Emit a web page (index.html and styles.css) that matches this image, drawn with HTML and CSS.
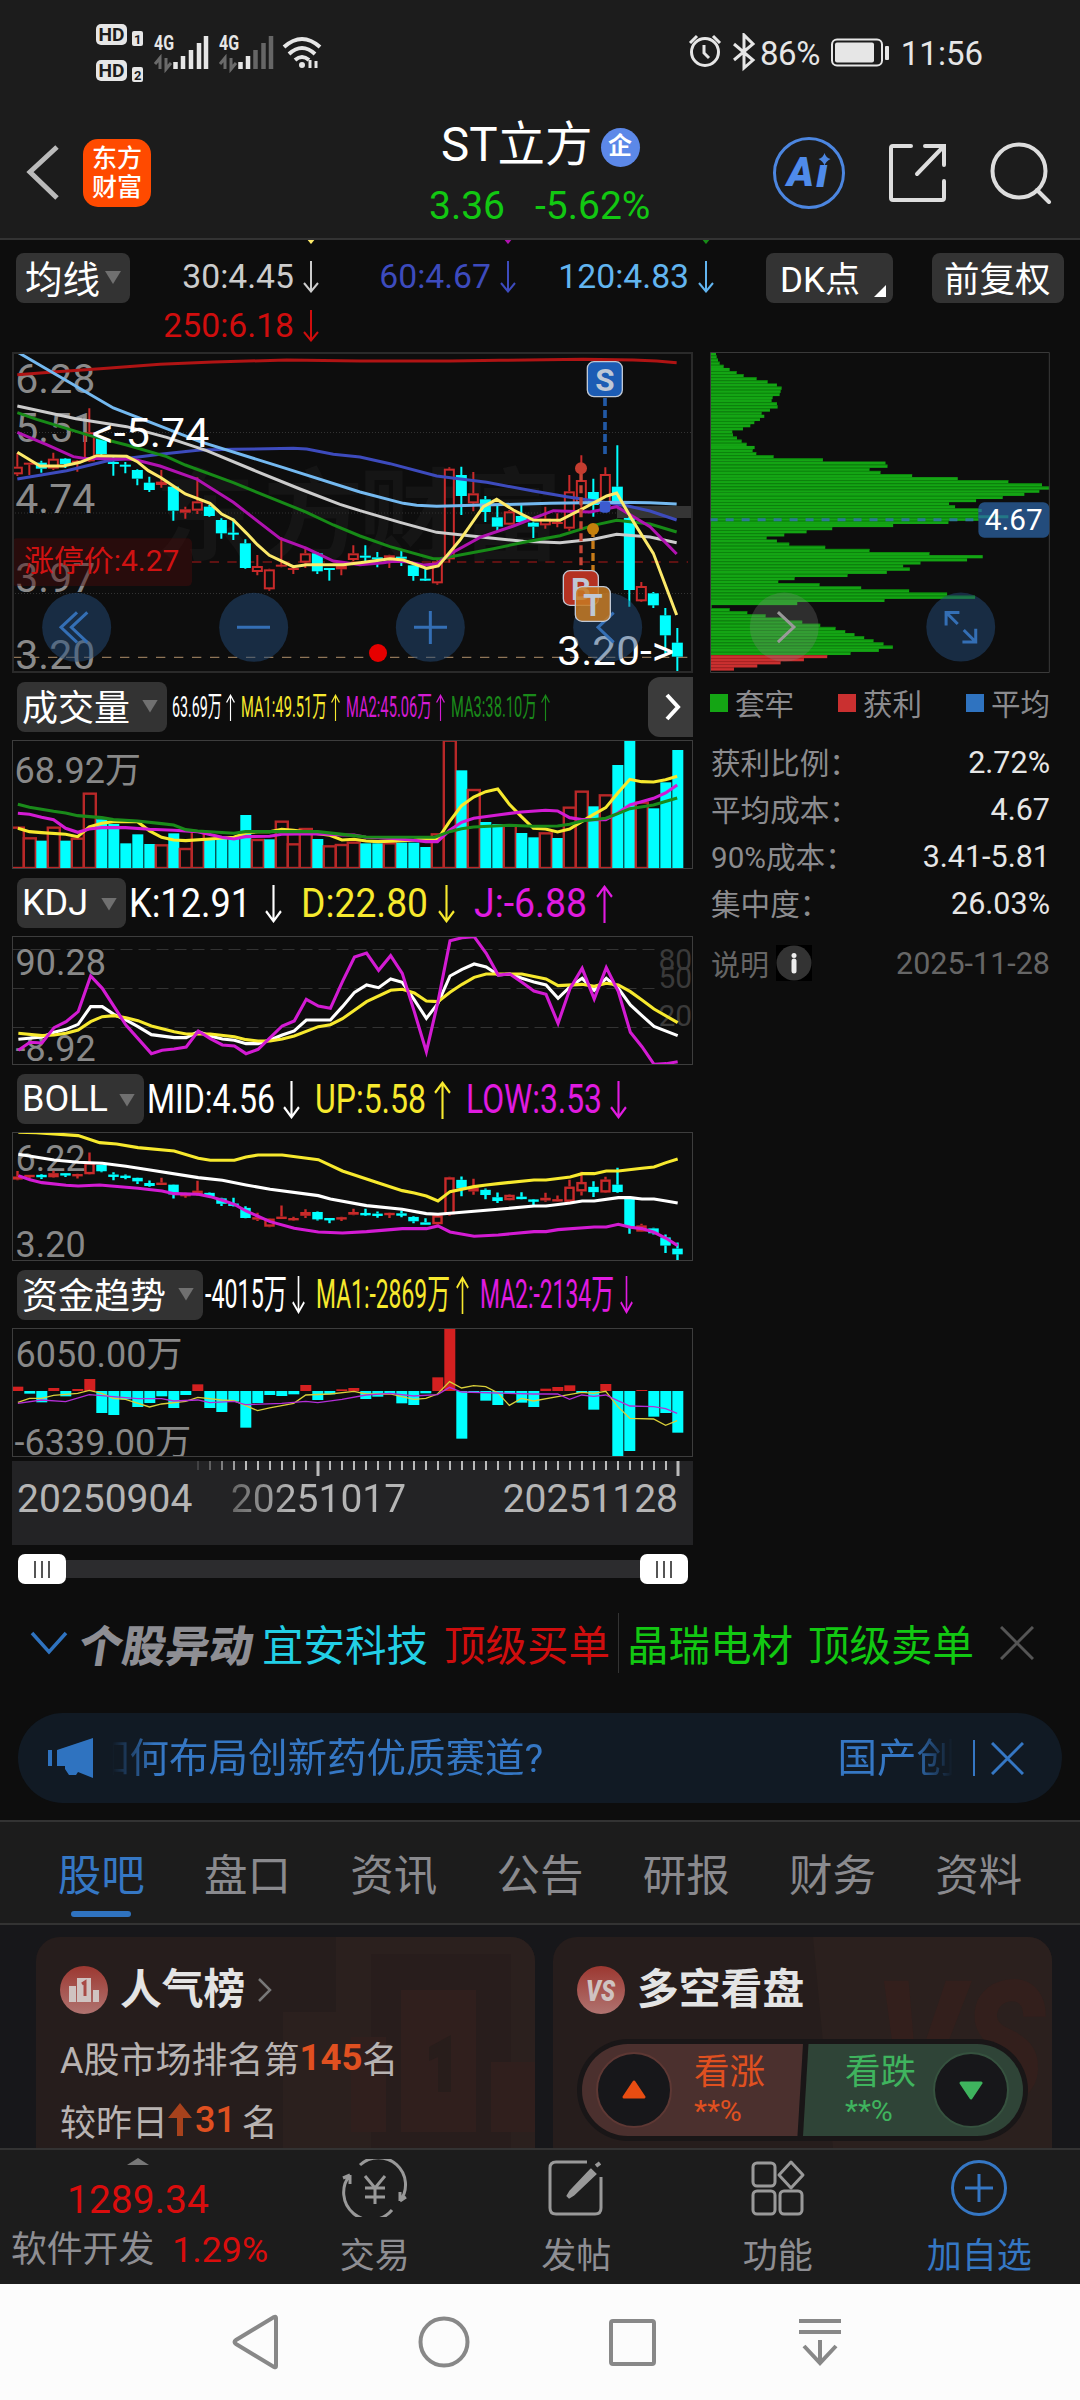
FILE: index.html
```html
<!DOCTYPE html>
<html lang="zh-CN">
<head>
  <meta charset="UTF-8">
  <title>ST立方</title>
  <link rel="stylesheet" href="styles.css">
</head>
<body>

<svg class="defs">
  <symbol id="down" viewBox="0 0 16 32" preserveAspectRatio="none"><path d="M8 0V30M1 22L8 30.5L15 22" fill="none" stroke="currentColor" stroke-width="2"/></symbol>
  <symbol id="up" viewBox="0 0 16 32" preserveAspectRatio="none"><path d="M8 32V2M1 10L8 1.5L15 10" fill="none" stroke="currentColor" stroke-width="2"/></symbol>
</svg>

<div class="status-bar">
  <svg width="230" height="70" viewBox="94 20 230 70">
    <g fill="#e6e6e6">
      <rect x="96" y="24" width="31" height="21" rx="5"/>
      <rect x="132" y="31" width="11" height="15" rx="2"/>
      <rect x="96" y="60" width="31" height="21" rx="5"/>
      <rect x="132" y="67" width="11" height="15" rx="2"/>
    </g>
    <g class="hd">
      <text x="98.500" y="41" textLength="26">HD</text>
      <text x="98.500" y="77" textLength="26">HD</text>
      <text class="num" x="134" y="43.500">1</text>
      <text class="num" x="134" y="79.500">2</text>
    </g>
    <g class="net">
      <text x="154" y="50" textLength="20" lengthAdjust="spacingAndGlyphs">4G</text>
      <text x="219" y="50" textLength="20" lengthAdjust="spacingAndGlyphs">4G</text>
    </g>
    <g stroke="#6a6a6a" stroke-width="3" fill="none">
      <path d="M160 69V58L155 64M166 58V69L171 63M225 69V58L220 64M231 58V69L236 63"/>
    </g>
    <g stroke="#e6e6e6" stroke-width="4.500">
      <path d="M175.500 69V62M183 69V56M191 69V50M199 69V43M206 69V36M240.500 69V62M248 69V56"/>
      <path d="M255.500 69V50M263.500 69V43M271 69V36" stroke="#666"/>
    </g>
    <g stroke="#e6e6e6" stroke-width="4" fill="none">
      <path d="M284 47Q302 31 320 47M289 54Q302 42 315 54M295 60Q302 54 309 60"/>
      <path d="M310 68V60M316 61V68" stroke-width="3"/>
      <circle cx="302" cy="65" r="2" fill="#e6e6e6" stroke-width="2"/>
    </g>
  </svg>
  <div class="status-right">
    <svg width="72" height="40" viewBox="688 34 72 40" fill="none" stroke="#e6e6e6">
      <circle cx="705" cy="53" r="13.500" stroke-width="3"/>
      <path d="M704 46V54L709 59M690 44L697 37M720 44L713 37" stroke-width="3"/>
      <path d="M734 45L753 61L744 69V36L753 45L734 61" stroke-width="3"/>
    </svg>
    <span class="battery-text">86%</span>
    <svg class="battery" width="60" height="30" viewBox="831 38 60 30">
      <rect x="833" y="39.500" width="50" height="26" rx="5" fill="none" stroke="#e6e6e6" stroke-width="2"/>
      <rect x="836" y="42.500" width="39" height="20" rx="2" fill="#e6e6e6"/>
      <rect x="886" y="46" width="4" height="14" rx="1" fill="#e6e6e6"/>
    </svg>
    <span>11:56</span>
  </div>
</div>

<div class="header">
  <svg class="back" width="36" height="60" viewBox="0 0 36 60"><path d="M33 4L6 29L33 55" fill="none" stroke="#bbb" stroke-width="5"/></svg>
  <div class="app-logo">东方<br>财富</div>
  <div class="title-box">
    <div class="stock-name">ST立方<span class="badge">企</span></div>
    <div class="quote"><span>3.36</span><span>-5.62%</span></div>
  </div>
  <div class="header-icons">
    <svg width="74" height="74" viewBox="0 0 74 74">
      <circle cx="37" cy="37" r="34.500" fill="none" stroke="#4c86e0" stroke-width="3"/>
      <text class="ai" x="15" y="50" textLength="27">A</text>
      <text class="ai" x="44" y="51" textLength="12">ı</text>
      <path d="M52.500 17Q54 22 58.500 23Q54 25 52.500 29.500Q51 25 46.500 23Q51 22 52.500 17Z" fill="#4c86e0"/>
    </svg>
    <svg width="60" height="62" viewBox="0 0 60 62"><path d="M23 4H5Q3 4 3 6V56Q3 58 5 58H54Q56 58 56 56V39M37 4H56V23M56 4L29 32" fill="none" stroke="#ddd" stroke-width="4" stroke-linecap="round"/></svg>
    <svg width="62" height="62" viewBox="0 0 62 62"><circle cx="29" cy="29" r="26.500" fill="none" stroke="#ddd" stroke-width="4"/><path d="M47 48L59 60" stroke="#ddd" stroke-width="4" stroke-linecap="round"/></svg>
  </div>
</div>

<div class="ma-bar">
  <div class="tag ma-select">均线<i class="caret"></i></div>
  <div class="ma-values">
    <span class="c-yellow">5:3.73<svg><use href="#down"/></svg></span>
    <span class="c-magenta">10:4.27<svg><use href="#down"/></svg></span>
    <span class="c-green">20:4.46<svg><use href="#down"/></svg></span>
    <span class="c-grey">30:4.45<svg><use href="#down"/></svg></span>
    <span class="c-blue">60:4.67<svg><use href="#down"/></svg></span>
    <span class="c-sky">120:4.83<svg><use href="#down"/></svg></span>
    <span class="c-red">250:6.18<svg><use href="#down"/></svg></span>
  </div>
  <div class="tag dk">DK点</div>
  <div class="tag fq">前复权</div>
</div>

<div class="charts">
  <div class="left">
    <svg class="kline" viewBox="36 36 2043 963">
      <g class="watermark"><text x="465" y="635">东</text><text x="790" y="635">方</text><text x="1075" y="635">财</text><text x="1385" y="635">富</text></g>
      <path d="M36 277.500H2078M36 519H2078M36 760.500H2078" stroke="#333" stroke-width="3" stroke-dasharray="3 6"/>
      <path d="M576 666H2064" stroke="#7a1515" stroke-width="5" stroke-dasharray="28 25"/>
      <path d="M36 952H2064" stroke="#8f7557" stroke-width="4" stroke-dasharray="28 26"/>
      <rect x="1851" y="498" width="228" height="36" fill="#353535"/>
      <g class="scale">
        <text x="46" y="158">6.28</text>
        <text x="46" y="305">5.51</text>
        <text x="46" y="518">4.74</text>
        <text x="46" y="757">3.97</text>
        <text x="46" y="988">3.20</text>
      </g>
      <g id="candles"></g>
      <g class="ma-lines">
        <polyline stroke="#b01414" points="52,104 170,95 300,86 480,73 640,66 860,60 1080,63 1350,63 1500,61 1750,58 1900,60 1970,63 2030,68"/>
        <polyline stroke="#3d4bbd" points="52,417 200,392 320,363 480,343 600,330 700,328 880,325 920,327 1000,343 1080,351 1170,371 1310,408 1460,427 1600,453 1700,470 1800,485 1880,497 1950,513 2030,540"/>
        <polyline stroke="#74b9f0" points="52,36 340,204 600,305 850,383 1080,456 1210,490 1250,496 1310,499 1450,495 1650,490 1850,487 1950,488 2030,492"/>
        <polyline stroke="#ccc" points="52,198 228,236 380,260 500,292 620,332 760,390 900,447 1020,493 1080,512 1200,547 1310,577 1450,592 1570,604 1680,608 1780,598 1850,583 1950,591 2030,608"/>
        <polyline stroke="#178a17" points="52,218 110,238 270,287 380,315 500,350 556,375 700,428 920,517 1000,555 1080,588 1170,620 1300,656 1320,656 1480,626 1580,605 1680,587 1780,556 1850,541 1950,552 2030,576"/>
        <polyline stroke="#b012b0" points="52,277 140,314 220,350 250,355 400,358 480,378 590,417 700,487 840,595 920,625 1000,663 1080,674 1150,668 1180,664 1220,665 1270,675 1310,672 1350,642 1440,592 1540,558 1660,512 1770,516 1850,500 1950,560 2030,642"/>
        <polyline stroke="#fce96a" points="52,337 120,378 190,378 240,367 290,347 380,349 412,365 445,392 483,413 556,462 630,490 665,522 700,540 740,580 772,614 808,646 880,680 920,674 1030,674 1080,668 1170,656 1210,660 1280,685 1315,678 1380,600 1450,500 1490,478 1540,510 1600,540 1680,541 1750,505 1820,468 1850,459 1900,545 1960,640 2030,825"/>
      </g>
      <path d="M1815 174V345" stroke="#2259a5" stroke-width="11" stroke-dasharray="24 12"/>
      <path d="M1743 400V692" stroke="#c74536" stroke-width="10" stroke-dasharray="24 12"/>
      <path d="M1779 567V742" stroke="#c77b18" stroke-width="10" stroke-dasharray="24 12"/>
      <circle cx="1743" cy="385" r="18" fill="#c43d30"/>
      <circle cx="1779" cy="567" r="18" fill="#c5800c"/>
      <rect x="1799" y="484" width="32" height="34" rx="10" fill="#3c5bd0"/>
      <rect x="36" y="595" width="540" height="143" rx="14" fill="#4a0a0a" fill-opacity=".45"/>
      <text class="limit" x="72" y="694" textLength="466">涨停价:4.27</text>
      <g class="peak">
        <text x="276" y="320" textLength="352">&lt;-5.74</text>
        <text x="1672" y="975" textLength="350">3.20-&gt;</text>
      </g>
      <g fill="#244c7a" fill-opacity=".5">
        <circle cx="230" cy="862" r="103.500"/>
        <circle cx="761" cy="862" r="103.500"/>
        <circle cx="1291" cy="862" r="103.500"/>
        <circle cx="1823" cy="862" r="103.500"/>
      </g>
      <path d="M231 817L183 862L231 907M262 817L214 862L262 907M711 862H810M1242 862H1341M1291 813V912M1841 818L1794 862L1841 907" fill="none" stroke="#346fb5" stroke-width="9"/>
      <g class="mark" stroke="#c0c8d4" stroke-width="4">
        <rect x="1762" y="65" width="105" height="105" rx="20" fill="#1c5cb4"/>
        <text x="1815" y="154">S</text>
        <rect x="1690" y="692" width="105" height="104" rx="20" fill="#b43222"/>
        <text x="1743" y="780">B</text>
        <rect x="1726" y="740" width="105" height="104" rx="20" fill="#c77a22" fill-opacity=".85"/>
        <text x="1779" y="829">T</text>
      </g>
      <circle cx="1134" cy="939" r="27" fill="#e60000"/>
    </svg>

    <div class="ind-row">
      <div class="tag vol">成交量<i class="caret"></i></div>
      <svg width="478" height="67" viewBox="167 0 478 67" class="small">
        <g color="#fff"><text x="172" y="44" textLength="50">63.69万</text><use href="#up" x="226" y="21" width="9" height="27"/></g>
        <g color="#f7e92e"><text x="241" y="44" textLength="86">MA1:49.51万</text><use href="#up" x="331" y="21" width="9" height="27"/></g>
        <g color="#d31bd3"><text x="346" y="44" textLength="86">MA2:45.06万</text><use href="#up" x="436" y="21" width="9" height="27"/></g>
        <g color="#1a8a1a"><text x="451" y="44" textLength="86">MA3:38.10万</text><use href="#up" x="541" y="21" width="9" height="27"/></g>
      </svg>
      <div class="pager"><svg width="20" height="30" viewBox="0 0 20 30"><path d="M4 3L15 15L4 27" fill="none" stroke="#fff" stroke-width="4"/></svg></div>
    </div>
    <div class="pane">
      <svg viewBox="12 740 680 129">
        <text x="14" y="783">68.92万</text>
        <g id="volume"></g>
        <g class="lines" transform="translate(-.5 675) scale(.4464 .3333)">
          <polyline stroke="#f7e92e" points="40,460 66,470 93,473 147,478 174,485 200,456 228,445 254,440 308,440 335,468 362,487 389,495 416,497 470,492 524,487 550,474 577,470 604,470 631,463 658,466 712,476 739,481 766,495 793,493 820,498 847,500 900,497 927,496 954,490 980,494 1007,440 1034,392 1061,366 1088,350 1115,342 1141,388 1168,425 1195,460 1222,462 1249,471 1276,462 1303,440 1330,418 1357,398 1384,354 1411,313 1437,320 1464,321 1491,314 1517,304"/>
          <polyline stroke="#d31bd3" points="40,415 66,418 93,427 120,434 147,460 174,472 200,462 228,458 281,458 335,463 389,466 443,470 497,487 524,492 550,485 604,484 631,478 712,476 766,480 793,480 820,487 874,490 927,496 954,500 980,500 1007,466 1034,442 1061,430 1115,420 1168,411 1222,406 1249,408 1276,428 1303,434 1357,434 1384,414 1411,390 1437,380 1464,370 1491,354 1517,330"/>
          <polyline stroke="#1a8a1a" points="40,388 66,397 120,409 147,414 174,422 228,428 254,434 308,438 362,446 389,450 416,464 443,468 524,475 550,470 604,470 712,470 793,482 820,486 974,487 1007,470 1034,461 1061,456 1141,451 1195,454 1249,453 1276,448 1303,438 1357,430 1384,416 1411,401 1464,390 1517,369"/>
        </g>
      </svg>
    </div>

    <div class="ind-row">
      <div class="tag kdj">KDJ<i class="caret"></i></div>
      <svg width="566" height="67" viewBox="126 0 566 67">
        <g color="#fff"><text x="129" y="48" textLength="122">K:12.91</text><use href="#down" x="265" y="16" width="17" height="38"/></g>
        <g color="#f7e92e"><text x="301" y="48" textLength="127">D:22.80</text><use href="#down" x="438" y="16" width="17" height="38"/></g>
        <g color="#e01be0"><text x="474" y="48" textLength="113">J:-6.88</text><use href="#up" x="596" y="16" width="17" height="38"/></g>
      </svg>
    </div>
    <div class="pane">
      <svg viewBox="12 936 680 129">
        <path d="M12 949.500H660M12 988.500H660M12 1027.500H650" stroke="#333" stroke-width="1" stroke-dasharray="12 6"/>
        <text x="15" y="975">90.28</text>
        <text x="15" y="1061">-8.92</text>
        <g class="levels"><text x="658" y="970">80</text><text x="658" y="988">50</text><text x="658" y="1026">20</text></g>
        <g class="lines" transform="translate(0 925) scale(.4464 .3333)">
          <polyline stroke="#fff" points="40,343 93,336 120,322 147,313 174,298 202,245 228,245 254,268 281,285 308,305 338,329 389,338 416,338 443,320 470,333 497,342 524,346 550,356 577,356 604,345 631,330 658,318 685,285 739,285 766,245 793,202 820,180 847,188 874,162 900,172 927,225 954,280 980,235 1007,153 1034,133 1061,117 1088,126 1115,150 1141,147 1168,160 1195,171 1222,180 1249,220 1276,185 1303,160 1330,196 1357,160 1384,190 1411,240 1437,272 1464,304 1517,332"/>
          <polyline stroke="#f7e92e" points="40,325 93,332 120,330 147,325 174,315 202,290 228,275 254,272 281,278 308,287 338,303 389,320 416,327 470,327 524,335 550,344 577,348 604,348 631,342 658,333 712,305 739,299 766,281 820,230 874,196 900,193 927,204 954,228 980,230 1007,202 1034,178 1061,157 1088,147 1168,147 1222,162 1249,182 1303,178 1330,184 1357,175 1384,180 1411,200 1437,225 1464,252 1517,293"/>
          <polyline stroke="#d31bd3" points="40,376 66,352 93,354 120,308 147,290 174,260 202,153 228,190 281,300 338,386 362,376 389,372 416,366 443,318 470,341 497,360 524,363 550,386 577,373 631,303 658,288 685,223 712,243 739,250 766,170 793,96 820,84 847,136 874,92 900,145 927,260 954,380 980,230 1007,47 1034,38 1061,35 1088,85 1115,150 1141,147 1168,172 1195,198 1222,208 1249,295 1276,190 1303,130 1330,222 1357,128 1384,200 1411,322 1437,365 1464,418 1491,416 1517,410"/>
        </g>
      </svg>
    </div>

    <div class="ind-row">
      <div class="tag bol">BOLL<i class="caret"></i></div>
      <svg width="548" height="67" viewBox="144 0 548 67">
        <g color="#fff"><text x="147" y="48" textLength="128">MID:4.56</text><use href="#down" x="283" y="16" width="17" height="38"/></g>
        <g color="#f7e92e"><text x="315" y="48" textLength="111">UP:5.58</text><use href="#up" x="434" y="16" width="17" height="38"/></g>
        <g color="#e01be0"><text x="466" y="48" textLength="136">LOW:3.53</text><use href="#down" x="610" y="16" width="17" height="38"/></g>
      </svg>
    </div>
    <div class="pane">
      <svg viewBox="12 1132 680 129">
        <text x="15" y="1171">6.22</text>
        <text x="15" y="1257">3.20</text>
        <g id="boll"></g>
        <g class="lines" transform="translate(0 925) scale(.4464 .3333)">
          <polyline stroke="#f7e92e" points="40,622 80,623 174,632 222,653 260,657 308,668 389,678 443,700 470,706 524,706 550,696 577,690 631,690 712,704 766,738 847,774 900,797 927,804 954,813 980,828 1007,800 1061,785 1088,780 1115,776 1195,765 1222,765 1276,756 1303,746 1330,746 1357,738 1384,738 1437,730 1464,726 1491,713 1517,702"/>
          <polyline stroke="#fff" points="40,688 120,705 174,712 228,715 281,724 335,735 443,758 497,766 550,780 604,793 712,812 739,822 820,842 900,853 954,866 980,868 1034,862 1115,853 1195,843 1222,843 1276,834 1303,828 1330,828 1384,818 1411,818 1437,822 1464,822 1491,828 1517,834"/>
          <polyline stroke="#d31bd3" points="40,752 66,764 93,773 147,781 174,783 222,780 308,790 362,798 389,806 443,808 470,815 497,826 524,838 550,858 604,890 658,910 712,921 766,924 820,920 874,914 900,911 954,911 980,903 1007,921 1061,934 1115,930 1195,920 1222,920 1249,914 1330,906 1357,906 1384,898 1411,907 1437,911 1464,922 1491,940 1517,962"/>
        </g>
      </svg>
    </div>

    <div class="ind-row">
      <div class="tag fnd">资金趋势<i class="caret"></i></div>
      <svg width="489" height="67" viewBox="203 0 489 67">
        <g color="#fff"><text x="205" y="47" textLength="82">-4015万</text><use href="#down" x="292" y="15" width="13" height="38"/></g>
        <g color="#f7e92e"><text x="316" y="47" textLength="134">MA1:-2869万</text><use href="#up" x="456" y="15" width="13" height="38"/></g>
        <g color="#e01be0"><text x="480" y="47" textLength="134">MA2:-2134万</text><use href="#down" x="620" y="15" width="13" height="38"/></g>
      </svg>
    </div>
    <div class="pane">
      <svg viewBox="12 1328 680 129">
        <text x="15" y="1367">6050.00万</text>
        <text x="14" y="1455">-6339.00万</text>
        <g id="fund"></g>
        <g class="lines thin" transform="translate(-.5 1260) scale(.4464 .3333)">
          <polyline stroke="#d9cf3a" points="40,427 66,415 93,415 120,406 174,400 200,391 228,400 254,415 281,418 335,441 362,432 416,424 443,412 497,420 524,422 577,452 604,444 658,430 685,405 739,402 793,394 820,402 874,402 927,418 954,415 980,402 1007,365 1034,384 1061,377 1088,380 1115,398 1141,436 1168,415 1195,423 1249,410 1303,397 1330,400 1357,394 1384,440 1411,475 1464,477 1491,496 1517,482"/>
          <polyline stroke="#b32ed6" points="40,430 93,420 147,425 200,404 254,410 308,416 362,416 389,423 443,420 470,428 524,424 550,434 631,430 685,424 712,428 766,418 820,405 874,400 927,408 980,404 1007,382 1034,396 1195,402 1249,402 1276,418 1303,405 1330,409 1357,405 1384,422 1411,438 1464,440 1491,446 1517,460"/>
        </g>
      </svg>
    </div>

    <div class="dates">
      <svg id="ticks" width="681" height="20" viewBox="12 0 681 20"></svg>
      <div class="date-labels"><span>20250904</span><span class="mid">20251017</span><span>20251128</span></div>
    </div>
    <div class="slider">
      <div class="handle"><i></i><i></i><i></i></div>
      <div class="track"></div>
      <div class="handle"><i></i><i></i><i></i></div>
    </div>
  </div>

  <div class="right">
    <svg class="chips" viewBox="61 36 1021 964">
      <g id="chips"></g>
      <path d="M62.500 37.500H1080V998.500H62.500Z" fill="none" stroke="#3a3a3a" stroke-width="3"/>
      <path d="M63 540H867" stroke="#2c7a94" stroke-width="9" stroke-dasharray="24 24" stroke-dashoffset="3"/>
      <rect x="867" y="487" width="213" height="107" rx="18" fill="#234c7c"/>
      <path d="M867 512H877M867 531H957" stroke="#237886" stroke-width="9"/>
      <text class="avg" x="886" y="570" textLength="174">4.67</text>
      <circle cx="284" cy="862" r="103.500" fill="#888" fill-opacity=".27"/>
      <path d="M265 817L313 862L265 907" fill="none" stroke="#999" stroke-width="9"/>
      <circle cx="814" cy="862" r="103.500" fill="#244c7a" fill-opacity=".5"/>
      <path d="M810 818H770V857M770 818L805 853M859 867V907H819M823 871L859 907" fill="none" stroke="#346fb5" stroke-width="9"/>
    </svg>
    <div class="legend">
      <span><i class="g"></i>套牢</span><span><i class="r"></i>获利</span><span><i class="b"></i>平均</span>
    </div>
    <dl class="chip-info">
      <div><dt>获利比例：</dt><dd>2.72%</dd></div>
      <div><dt>平均成本：</dt><dd>4.67</dd></div>
      <div><dt>90%成本：</dt><dd>3.41-5.81</dd></div>
      <div><dt>集中度：</dt><dd>26.03%</dd></div>
    </dl>
    <div class="explain"><span>说明</span><svg width="36" height="36" viewBox="0 0 36 36"><rect width="36" height="36" fill="#000"/><circle cx="18" cy="18" r="17.500" fill="#333"/><circle cx="18" cy="10.500" r="2.500" fill="#eee"/><path d="M18 16V26" stroke="#eee" stroke-width="5" stroke-linecap="round"/></svg><time>2025-11-28</time></div>
  </div>
</div>

<div class="alerts">
  <svg width="38" height="24" viewBox="0 0 38 24"><path d="M2 2L19 21L36 2" fill="none" stroke="#2f73c0" stroke-width="3.500"/></svg>
  <b>个股异动</b>
  <span class="c-cyan">宜安科技</span>
  <span class="c-red">顶级买单</span>
  <i class="split"></i>
  <span class="c-lime">晶瑞电材</span>
  <span class="c-lime">顶级卖单</span>
  <svg class="close" width="34" height="34" viewBox="0 0 34 34"><path d="M1 1L33 33M33 1L1 33" stroke="#555" stroke-width="3"/></svg>
</div>

<div class="notice">
  <svg width="46" height="40" viewBox="0 0 46 40"><path d="M0 12H4V28H0ZM9 12L45 0V40L30 34L28 37H21L17 31V28H9Z" fill="#2f73c0"/></svg>
  <div class="scroll-text"><span>如何布局创新药优质赛道?</span><span class="next">国产创</span></div>
  <i></i>
  <svg width="33" height="33" viewBox="0 0 33 33"><path d="M1 1L32 32M32 1L1 32" stroke="#3577c4" stroke-width="3"/></svg>
</div>

<div class="tabs">
  <span class="active">股吧</span><span>盘口</span><span>资讯</span><span>公告</span><span>研报</span><span>财务</span><span>资料</span>
</div>

<div class="cards">
  <div class="card">
    <svg class="card-bg" viewBox="0 0 499 211"><path d="M247 75H300V0H499V211H247Z" fill="#2b201e"/><path d="M335 17H475V211H335Z" fill="#281d1c"/><path d="M365 53H440V195H365ZM455 125H499V195H455ZM315 100H350V195H315Z" fill="#301f1d"/><path d="M393 110L415 98V155H402V120L393 124Z" fill="#281d1b"/></svg>
    <h3><svg width="48" height="48" viewBox="0 0 48 48"><circle cx="24" cy="24" r="24" fill="url(#rd)"/><path d="M9 20H16V36H9ZM17 12H31V36H17ZM33 24H39V36H33Z" fill="#cfc3c1"/><path d="M22 18L25 16V30" fill="none" stroke="#a84a45" stroke-width="3"/></svg>人气榜<svg class="more" width="16" height="26" viewBox="0 0 16 26"><path d="M2 2L13 13L2 24" fill="none" stroke="#777" stroke-width="2.500"/></svg></h3>
    <p>A股市场排名第<b>145</b>名</p>
    <p>较昨日<svg width="24" height="34" viewBox="0 0 24 34"><path d="M12 0L24 15H15V33H9V15H0Z" fill="#a8421c"/></svg><b class="diff">31</b> 名</p>
  </div>
  <div class="card">
    <svg class="card-bg" viewBox="0 0 499 211"><path d="M260 0H499V211H280Z" fill="#2b201e"/><text class="vs-bg" x="322" y="165" textLength="170">VS</text></svg>
    <h3><svg width="48" height="48" viewBox="0 0 48 48"><defs><linearGradient id="rd" x2="0" y2="1"><stop offset="0" stop-color="#9c3831"/><stop offset="1" stop-color="#b07370"/></linearGradient></defs><circle cx="24" cy="24" r="24" fill="url(#rd)"/><text class="vs" x="9" y="35" textLength="29">VS</text></svg>多空看盘</h3>
    <div class="vote">
      <div class="bull"><div class="dot"><svg width="24" height="20" viewBox="0 0 24 20"><path d="M12 2L22 17H2Z" fill="#e84d12" stroke="#e84d12" stroke-width="3" stroke-linejoin="round"/></svg></div><div>看涨<small>**%</small></div></div>
      <div class="bear"><div>看跌<small>**%</small></div><div class="dot"><svg width="24" height="20" viewBox="0 0 24 20"><path d="M12 18L22 3H2Z" fill="#3fb45e" stroke="#3fb45e" stroke-width="3" stroke-linejoin="round"/></svg></div></div>
    </div>
  </div>
</div>

<div class="toolbar">
  <div class="index">
    <i></i>
    <strong>1289.34</strong>
    <div><span>软件开发</span><em>1.29%</em></div>
  </div>
  <div class="tool"><svg width="66" height="58" viewBox="0 0 66 58" fill="none" stroke="#999" stroke-width="3"><path d="M18 6A27 27 0 0 1 58 42M58 42L64 38M58 42V33M50 51A27 27 0 0 1 8 16M8 16L1 19M8 16V25"/><path d="M23 17L33 29L43 17M33 29V45M23 29H43M23 38H43"/></svg>交易</div>
  <div class="tool"><svg width="56" height="56" viewBox="0 0 56 56" fill="none" stroke="#999" stroke-width="3"><path d="M39 2H8Q2 2 2 8V48Q2 54 8 54H47Q53 54 53 48V17"/><path d="M43 11L23 32L20 37L25 34L46 14ZM48 6L52 3" stroke-width="4"/></svg>发帖</div>
  <div class="tool"><svg width="56" height="56" viewBox="0 0 56 56" fill="none" stroke="#999" stroke-width="3"><rect x="3" y="3" width="22" height="23" rx="4"/><rect x="3" y="31" width="22" height="23" rx="4"/><rect x="30" y="31" width="22" height="23" rx="4"/><path d="M41 2L53 15L41 28L29 15Z" stroke-linejoin="round"/></svg>功能</div>
  <div class="tool add"><svg width="58" height="58" viewBox="0 0 58 58" fill="none" stroke="#3577c4" stroke-width="3"><circle cx="29" cy="29" r="26.500"/><path d="M29 15V43M15 29H43"/></svg>加自选</div>
</div>

<div class="nav">
  <svg width="60" height="60" viewBox="0 0 60 60"><path d="M50 6V54Q50 56 48 55L10 32Q7 30 10 28L48 5Q50 4 50 6Z"/></svg>
  <svg width="60" height="60" viewBox="0 0 60 60"><circle cx="30" cy="30" r="23.500"/></svg>
  <svg width="60" height="60" viewBox="0 0 60 60"><rect x="9" y="9" width="43" height="43" rx="2"/></svg>
  <svg width="60" height="60" viewBox="0 0 60 60"><path d="M9 9H51M9 20H51M30 28V51M14 34L30 51L46 34"/></svg>
</div>

<script src="script.js"></script>
</body>
</html>
```
FILE: styles.css
```css
* {
  box-sizing: border-box;
}

body {
  margin: 0;
  width: 1080px;
  height: 2400px;
  overflow: hidden;
  background: #0d0d0d;
  color: #fff;
  font-family: Roboto, "Noto Sans CJK SC", sans-serif;
}

svg {
  display: block;
  flex: none;
}

i, em {
  font-style: normal;
}

.defs {
  width: 0;
  height: 0;
  position: absolute;
}

.c-yellow { color: #fce96a; }
.c-magenta { color: #b012b0; }
.c-green { color: #178a17; }
.c-grey { color: #ccc; }
.c-blue { color: #3d4bbd; }
.c-sky { color: #62b5f0; }
.c-red { color: #cf0d0d; }
.c-cyan { color: #22cfe6; }
.c-lime { color: #12c812; }

/* status bar */
.status-bar {
  height: 107px;
  padding: 20px 97px 0 94px;
  background: #1c1c1c;
  display: flex;
  justify-content: space-between;
}

.status-right {
  display: flex;
  align-items: center;
  height: 66px;
  font-size: 33px;
  color: #e6e6e6;
}

.battery-text {
  letter-spacing: -0.5px;
}

.battery {
  margin: 0 11px 0 10px;
}

.hd text {
  font-size: 19px;
  font-weight: 700;
  fill: #1c1c1c;
}

.hd .num {
  font-size: 13px;
}

.net text {
  font-size: 20px;
  font-weight: 700;
  fill: #e6e6e6;
}

/* header */
.header {
  height: 133px;
  padding: 0 28px 0 24px;
  background: #1c1c1c;
  border-bottom: 2px solid #333;
  display: flex;
  align-items: center;
}

.app-logo {
  width: 68px;
  height: 68px;
  margin-left: 23px;
  padding-top: 5px;
  border-radius: 15px;
  background: #ff4a00;
  font-size: 25px;
  line-height: 29px;
  font-weight: 500;
  text-align: center;
}

.title-box {
  flex: 1;
  padding-left: 278px;
}

.stock-name {
  display: flex;
  align-items: center;
  height: 50px;
  padding-left: 12px;
  line-height: 44px;
  font-size: 47.5px;
  padding-bottom: 4px;
}

.badge {
  width: 39px;
  height: 39px;
  margin: 4px 0 0 8px;
  border-radius: 50%;
  background: #5c88e8;
  font-size: 24px;
  line-height: 36px;
  font-weight: 700;
  text-align: center;
}

.quote {
  display: flex;
  gap: 30px;
  height: 51px;
  line-height: 69px;
  font-size: 39px;
  color: #12c812;
}

.header-icons {
  display: flex;
  align-items: center;
  gap: 42px;
}

.ai {
  font: italic 900 41px Roboto;
  fill: #4f8bea;
}

/* MA bar */
.tag {
  height: 50px;
  padding: 0 9px 4px 5px;
  border-radius: 8px;
  background: #333;
  display: flex;
  align-items: center;
  flex: none;
  font-size: 36px;
  white-space: nowrap;
}

.caret {
  width: 16px;
  height: 13px;
  margin-top: 3px;
  margin-left: auto;
  background: #707070;
  clip-path: polygon(0 0, 100% 0, 50% 100%);
}

.vol { width: 150px; }
.kdj { width: 109px; padding-bottom: 0; }
.bol { width: 127px; padding-bottom: 0; }
.fnd { width: 186px; }

.ma-bar {
  height: 112px;
  padding: 13px 16px;
  overflow: hidden;
  display: flex;
  align-items: flex-start;
}

.ma-select {
  width: 114px;
  padding-left: 9px;
  font-size: 37.5px;
}

.ma-values {
  display: grid;
  grid-template-columns: 189px 197px 198px;
  grid-auto-rows: 49px;
  width: 636px;
  margin-top: -50px;
  flex: none;
}

.ma-values span {
  display: flex;
  justify-content: flex-end;
  align-items: center;
  gap: 9px;
  font-size: 33.7px;
}

.ma-values svg {
  width: 16px;
  height: 32px;
}

.dk {
  position: relative;
  width: 127px;
  padding-left: 14px;
  font-size: 35px;
}

.dk::after {
  content: "";
  position: absolute;
  right: 7px;
  bottom: 6px;
  border: 6px solid transparent;
  border-right-color: #fff;
  border-bottom-color: #fff;
}

.fq {
  width: 132px;
  margin-left: 39px;
  padding-left: 12px;
  font-size: 35.5px;
}

/* charts */
.charts {
  display: grid;
  grid-template-columns: 681px 340px;
  column-gap: 17px;
  padding-left: 12px;
  height: 1244px;
}

.kline {
  width: 681px;
  height: 321px;
  outline: 2px solid #2a2a2a;
  outline-offset: -2px;
}

.kline text {
  font-size: 123px;
}

.kline .watermark text {
  font-size: 300px;
  font-weight: 700;
  fill: #151515;
}

.scale text {
  fill: #8a8a8a;
}

.peak text {
  fill: #fff;
}

.kline .limit {
  font-size: 88px;
  fill: #d01212;
}

.ma-lines polyline {
  fill: none;
  stroke-width: 9;
}

.kline .mark text {
  font-size: 94px;
  font-weight: 700;
  text-anchor: middle;
  fill: #bfc8d6;
  stroke: none;
}

.ind-row {
  display: flex;
  height: 67px;
  padding-left: 5px;
  align-items: center;
}

.ind-row text {
  font-size: 40px;
  fill: currentColor;
}

.ind-row .small text {
  font-size: 29px;
}

.pager {
  width: 45px;
  height: 60px;
  margin-left: auto;
  padding: 15px;
  border-radius: 12px 0 0 12px;
  background: #3b3b3b;
}

.pane {
  height: 129px;
}

.pane > svg {
  width: 681px;
  height: 129px;
  outline: 1px solid #3d3d3d;
  outline-offset: -1px;
}

.pane text {
  font-size: 36px;
  fill: #888;
}

.pane .levels text {
  font-size: 30px;
  fill: #3a3a3a;
}

.lines polyline {
  fill: none;
  stroke-width: 3.1px;
  vector-effect: non-scaling-stroke;
}

.thin polyline {
  stroke-width: 1.3px;
}

.dates {
  height: 84px;
  margin-top: 4px;
  background: #232325;
}

.date-labels {
  display: flex;
  justify-content: space-between;
  padding: 0 15px 0 5px;
  font-size: 39px;
  line-height: 36px;
  color: #b5b5b5;
}

.date-labels .mid {
  margin-right: 58px;
  background: linear-gradient(90deg, #666, #b5b5b5 35%);
  -webkit-background-clip: text;
  color: transparent;
}

.slider {
  display: flex;
  align-items: center;
  height: 30px;
  margin-top: 9px;
  padding: 0 5px 0 6px;
}

.track {
  flex: 1;
  height: 18px;
  background: #2c2c2e;
}

.handle {
  width: 48px;
  height: 30px;
  border-radius: 7px;
  background: #fff;
  display: flex;
  justify-content: center;
  align-items: center;
  gap: 5px;
}

.handle i {
  width: 2px;
  height: 17px;
  background: #555;
}

/* chip distribution */
.chips {
  width: 340px;
  height: 321px;
}

.avg {
  font-size: 90px;
  fill: #fff;
}

.legend {
  display: flex;
  justify-content: space-between;
  height: 58px;
  align-items: center;
  font-size: 29.5px;
  color: #8b8b8e;
}

.legend span {
  display: flex;
  align-items: center;
  gap: 7px;
}

.legend i {
  width: 18px;
  height: 18px;
  margin-top: 2px;
}

.legend .g { background: #14a514; }
.legend .r { background: #ca3030; }
.legend .b { background: #2f73c0; }

.chip-info {
  margin: 8px 0 0;
}

.chip-info div {
  display: flex;
  justify-content: space-between;
  height: 47px;
  align-items: center;
}

.chip-info dt {
  padding: 0 0 3px 1px;
  font-size: 29.6px;
  color: #8b8b8e;
}

.chip-info dd {
  margin: 0;
  font-size: 30.5px;
  color: #e6e6e6;
}

.explain {
  display: flex;
  align-items: center;
  height: 36px;
  margin-top: 18px;
  padding-left: 1px;
  font-size: 29px;
  color: #666;
}

.explain svg {
  margin-left: 7px;
}

.explain time {
  margin-left: auto;
  font-size: 30.5px;
}

/* alerts */
.alerts {
  display: flex;
  align-items: center;
  height: 96px;
  padding: 0 0 2px 30px;
  font-size: 41.5px;
  white-space: nowrap;
}

.alerts b {
  width: 172px;
  margin: 0 10px 0 12px;
  font-size: 43.5px;
  font-weight: 900;
  color: #8e8e93;
  transform: skewX(-9deg);
}

.alerts .c-red {
  margin-left: 16px;
}

.split {
  width: 1px;
  height: 60px;
  margin: 0 8px;
  background: #333;
}

.alerts .c-lime + .c-lime {
  margin-left: 15px;
}

.close {
  margin-left: 26px;
}

/* notice */
.notice {
  display: flex;
  align-items: center;
  height: 90px;
  margin: 21px 18px 0;
  padding: 0 38px 0 30px;
  border-radius: 45px;
  background: #111a24;
}

.scroll-text {
  display: flex;
  width: 842px;
  height: 60px;
  margin-left: 18px;
  overflow: hidden;
  line-height: 61px;
  font-size: 39.5px;
  color: #3577c4;
  white-space: nowrap;
  -webkit-mask-image: linear-gradient(90deg, transparent, #000 5%, #000 95%, transparent);
}

.scroll-text span:first-child {
  margin-left: -22px;
}

.scroll-text .next {
  margin: 0 -3px 0 auto;
}

.notice i {
  width: 2px;
  height: 36px;
  margin: 0 16px 0 20px;
  background: #3577c4;
}

/* tabs */
.tabs {
  display: flex;
  height: 105px;
  margin-top: 17px;
  padding: 0 28px;
  background: #1c1c1c;
  border-top: 2px solid #333;
  border-bottom: 2px solid #333;
}

.tabs span {
  position: relative;
  flex: 1;
  font-size: 43.5px;
  line-height: 110px;
  text-align: center;
  color: #8a8a8e;
}

.tabs .active {
  color: #3577c4;
}

.tabs .active::after {
  content: "";
  position: absolute;
  left: 43px;
  bottom: 6px;
  width: 60px;
  height: 6px;
  border-radius: 3px;
  background: #2f73c0;
}

/* cards */
.cards {
  display: flex;
  gap: 18px;
  height: 223px;
  padding: 12px 28px 0 36px;
  background: #17171a;
  overflow: hidden;
}

.card {
  position: relative;
  width: 499px;
  height: 240px;
  padding: 29px 24px;
  border-radius: 24px;
  overflow: hidden;
  background: #261d1c;
}

.card > * {
  position: relative;
}

.card .card-bg {
  position: absolute;
  top: 0;
  left: 0;
  width: 499px;
}

.vs-bg {
  font: italic 900 170px Roboto;
  fill: #331f1c;
}

.vs {
  font: italic 900 30px Roboto;
  fill: #cfc3c1;
}

.card h3 {
  display: flex;
  align-items: center;
  gap: 12px;
  height: 48px;
  margin: 0 0 13px;
  font-size: 41.8px;
  line-height: 48px;
  color: #e4e4e4;
}

.card p {
  display: flex;
  align-items: center;
  height: 63px;
  margin: 0;
  padding-bottom: 3px;
  font-size: 36px;
  color: #b8b3b2;
  white-space: pre;
}

.card p b {
  font-size: 36.5px;
  color: #e05020;
}

.card p .diff {
  margin: 0 -3px 0 3px;
  font-size: 36px;
  font-weight: 500;
}

.vote {
  display: flex;
  width: 451px;
  height: 102px;
  margin-top: 25px;
  padding: 5px;
  border-radius: 51px;
  background: #191617;
}

.vote > div {
  display: flex;
  align-items: center;
  padding: 0 14px;
  font-size: 35.5px;
  line-height: 41px;
}

.bull {
  width: 221px;
  gap: 22px;
  border-radius: 46px 0 0 46px;
  background: #4b302e;
  color: #e05020;
  clip-path: polygon(0 0, 100% 0, 97.5% 100%, 0 100%);
}

.bear {
  flex: 1;
  justify-content: space-between;
  border-radius: 0 46px 46px 0;
  background: #2f4437;
  color: #3fb45e;
  clip-path: polygon(2.5% 0, 100% 0, 100% 100%, 0 100%);
}

.vote .bear {
  padding-left: 42px;
}

.vote small {
  display: block;
  font-size: 30px;
  line-height: 35px;
}

.dot {
  width: 76px;
  height: 76px;
  flex: none;
  border-radius: 50%;
  background: #17171a;
  border: 2px solid #5e3834;
  display: flex;
  align-items: center;
  justify-content: center;
}

.bear .dot {
  border-color: #36523f;
}

/* toolbar */
.toolbar {
  display: flex;
  height: 136px;
  background: #1c1c1c;
  border-top: 2px solid #333;
}

.index {
  width: 274px;
  padding-top: 8px;
}

.index > i {
  display: block;
  width: 22px;
  height: 7px;
  margin-left: 127px;
  background: #777;
  clip-path: polygon(50% 0, 100% 100%, 0 100%);
}

.index strong {
  display: block;
  margin-left: 67px;
  font-size: 39px;
  line-height: 70px;
  font-weight: 400;
  color: #d90d0d;
}

.index div {
  display: flex;
  gap: 18px;
  padding-left: 11px;
  font-size: 35.8px;
  line-height: 30px;
  color: #8e8e93;
  white-space: nowrap;
}

.index em {
  color: #d90d0d;
}

.tool {
  width: 201.500px;
  padding-top: 9px;
  display: flex;
  flex-direction: column;
  align-items: center;
  font-size: 35px;
  line-height: 80px;
  color: #8e8e93;
}

.tool svg {
  height: 58px;
}

.tool.add {
  color: #3577c4;
}

/* system nav */
.nav {
  display: flex;
  gap: 128px;
  height: 116px;
  padding: 28px 0 0 226px;
  background: #fcfcfc;
}

.nav svg {
  fill: none;
  stroke: #888;
  stroke-width: 4;
}
```
FILE: script.js
```js
const RED = '#c92a2a';
const CYAN = '#00ffff';
const NS = 'http://www.w3.org/2000/svg';

function add(parent, tag, attrs) {
  const el = document.createElementNS(NS, tag);
  for (const k in attrs) el.setAttribute(k, attrs[k]);
  parent.appendChild(el);
}

const get = id => document.getElementById(id);

// squeeze glyphs as well as spacing for fixed-width labels
document.querySelectorAll('text[textLength]').forEach(t => t.setAttribute('lengthAdjust', 'spacingAndGlyphs'));

// direction, high, body top, body bottom, low
const candles = `r 340 380 403 408|r 368 368 374 405|c 362 368 386 398|r 338 356 386 390|c 354 356 372 384|r 360 362 366 395|r 205 277 364 366
c 292 295 342 350|c 350 366 372 407|c 366 374 378 400|c 388 390 416 436|c 410 428 450 456|r 390 425 435 443|c 438 440 512 542|r 500 508 518 536
r 412 484 512 522|c 495 500 528 530|c 535 540 580 596|c 536 578 582 600|c 598 610 684 686|r 645 678 696 706|r 686 688 748 752|r 592 674 680 682
r 675 684 690 702|r 620 640 668 684|c 636 640 694 702|c 684 684 688 722|r 675 678 688 706|r 616 640 660 664|c 616 647 652 668|c 636 652 656 682
r 644 646 654 684|c 630 650 656 678|c 672 676 708 722|c 686 716 720 722|r 660 664 730 734|r 382 386 658 668|c 380 405 468 525|r 396 460 490 514
c 468 478 516 546|c 498 532 560 574|r 510 514 554 556|c 495 528 546 548|c 545 548 560 594|r 500 536 556 566|r 520 546 552 562|r 405 454 566 572
r 346 420 490 520|c 416 456 495 530|r 382 402 498 502|c 316 440 494 500|c 530 534 750 800|r 726 738 784 786|c 756 760 796 804|c 804 826 886 940|c 864 908 950 1000`
  .split(/[|\n]/).map(s => s.split(' '));

function drawCandles(g, x0, step, w, sw, fy) {
  candles.forEach((c, i) => {
    const up = c[0] === 'r';
    const [h, t, b, l] = c.slice(1).map(v => fy(+v));
    const x = x0 + step * i;
    const color = up ? RED : CYAN;
    add(g, 'path', { d: `M${x} ${h}V${t}M${x} ${b}V${l}`, stroke: color, 'stroke-width': sw });
    if (up && b - t > sw) {
      add(g, 'rect', { x: x - w / 2 + sw / 2, y: t + sw / 2, width: w - sw, height: b - t - sw, fill: 'none', stroke: color, 'stroke-width': sw });
    } else {
      add(g, 'rect', { x: x - w / 2, y: t, width: w, height: Math.max(b - t, sw), fill: color });
    }
  });
}

drawCandles(get('candles'), 52, 36, 33, 6, v => v);
// same prices on the 6.22 - 3.20 axis
drawCandles(get('boll'), 17, 12, 10.5, 2.4, v => 1132 + (v * 0.0032 - 0.175) * 42.7);

const volume = [455, 487, 497, 455, 497, 488, 353, 433, 447, 505, 478, 507, 508, 475, 519, 466, 492, 492, 490, 420, 492, 493, 437, 505, 459, 492, 511, 507,
  500, 505, 505, 502, 503, 503, 516, 475, 194, 286, 342, 441, 447, 448, 474, 487, 472, 489, 395, 347, 394, 358, 270, 198, 380, 400, 322, 225];
const volDir = 'rrcrcrrcccccrcrrccccrcrrrcrrrccrcccrrcrccrccrcrrcrccrccc';
volume.forEach((v, i) => {
  const y = 675 + v / 3;
  const x = 16.8 + 12 * i;
  if (volDir[i] === 'r') {
    add(get('volume'), 'rect', { x: x - 5.5, y: y + 1, width: 12, height: 867 - y, fill: 'none', stroke: '#b82828', 'stroke-width': 2.4 });
  } else {
    add(get('volume'), 'rect', { x: x - 5, y, width: 11, height: 868 - y, fill: CYAN });
  }
});

const fund = [380, 401, 427, 384, 409, 387, 357, 459, 465, 418, 441, 429, 409, 444, 405, 373, 444, 456, 425, 503, 429, 405, 408, 403, 375, 420, 403, 388,
  384, 417, 410, 402, 430, 435, 400, 352, 205, 536, 399, 422, 435, 401, 428, 441, 386, 381, 376, 399, 449, 372, 590, 573, 390, 470, 459, 518];
fund.forEach((v, i) => {
  const y = 1260 + v / 3;
  add(get('fund'), 'rect', {
    x: 11.8 + 12 * i, y: Math.min(y, 1391), width: 11, height: Math.abs(y - 1391), fill: v < 393 ? '#d42020' : CYAN
  });
});

// date ruler, fades in from the left
for (let i = 15; i <= 55; i++) {
  const major = i === 25 || i === 55;
  add(get('ticks'), 'path', {
    d: `M${18 + 12 * i} 0V${major ? 15 : 9}`, stroke: '#bbb', 'stroke-width': major ? 3 : 2, opacity: Math.min(1, (i - 14) / 5)
  });
}

const chips = [79, 81, 85, 90, 102, 120, 141, 162, 201, 234, 262, 276, 273, 270, 249, 246, 262, 264, 241, 216, 224, 211, 194, 182, 160, 128, 130, 142, 156, 171,
  195, 189, 200, 252, 400, 588, 594, 540, 573, 668, 805, 957, 1058, 1080, 1050, 1005, 940, 860, 779, 797, 877, 900, 957, 870, 777, 611, 428, 351, 284, 231,
  262, 299, 407, 540, 720, 880, 833, 693, 641, 661, 592, 474, 315, 266, 390, 515, 659, 773, 857, 585, 323, 66, 120, 173, 228, 283, 338, 392, 438, 467, 495,
  524, 552, 582, 610, 568, 483, 413, 343, 273, 203, 133];
chips.forEach((v, i) => {
  const y = 37 + 9.37 * i;
  const red = i > 96;
  add(get('chips'), 'rect', { x: 63, y, width: v - 63, height: 9.5, fill: red ? '#ca3030' : '#14a514' });
  if (i % 5) add(get('chips'), 'rect', { x: 63, y, width: v - 63, height: 2.5, fill: red ? '#a82020' : '#0b800b' });
});
```
